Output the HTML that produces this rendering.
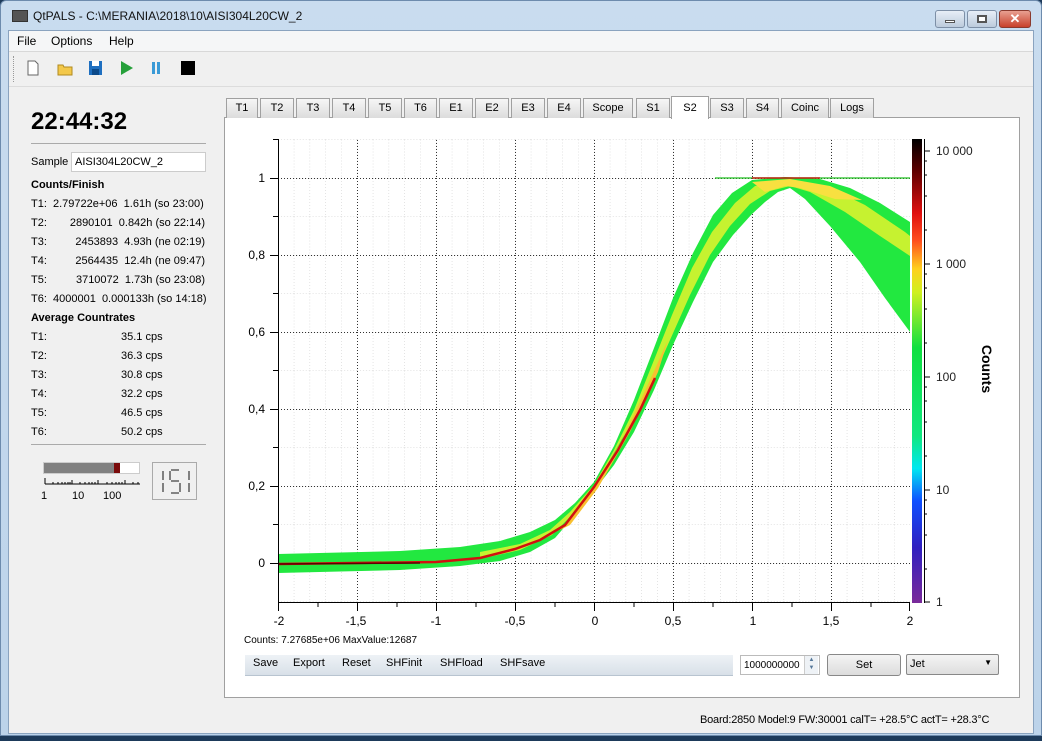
<!DOCTYPE html>
<html><head><meta charset="utf-8">
<style>
*{margin:0;padding:0;box-sizing:border-box}
body{width:1042px;height:741px;overflow:hidden;background:#1d3a5a;font-family:"Liberation Sans",sans-serif;font-size:11px;color:#000;position:relative}
.abs{position:absolute}
#frame{left:0;top:0;width:1042px;height:736px;background:linear-gradient(#c9dcef,#bcd3ea);border:1px solid #6d8bad;border-radius:6px 6px 0 0}
#client{left:8px;top:30px;width:1026px;height:704px;background:#f0f0f0;border:1px solid #8aa3bf}
.tab{position:absolute;top:98px;height:20px;border:1px solid #a0a0a0;border-bottom:none;background:linear-gradient(#f6f6f6,#dcdcdc);text-align:center;line-height:19px;font-size:11px}
.lp{position:absolute;left:31px;font-size:11px}
.r{position:absolute;text-align:right}
</style></head><body>
<div id="frame" class="abs"></div>
<div class="abs" style="left:12px;top:10px;width:16px;height:12px;background:#555;border:1px solid #333"></div>
<div class="abs" style="left:33px;top:9px;font-size:12px;color:#111">QtPALS - C:\MERANIA\2018\10\AISI304L20CW_2</div>
<div class="abs" style="left:935px;top:10px;width:30px;height:18px;border:1px solid #7d8fa6;border-radius:3px;background:linear-gradient(#e7eef7,#bccbdc)"><div style="margin:9px auto 0;width:10px;height:3px;background:#fff;border:1px solid #555"></div></div>
<div class="abs" style="left:967px;top:10px;width:30px;height:18px;border:1px solid #7d8fa6;border-radius:3px;background:linear-gradient(#e7eef7,#bccbdc)"><div style="margin:4px auto 0;width:10px;height:8px;border:2px solid #555;background:#fff"></div></div>
<div class="abs" style="left:999px;top:10px;width:32px;height:18px;border:1px solid #8a3a2e;border-radius:3px;background:linear-gradient(#e8a091,#c8402a);color:#fff;text-align:center;font-weight:bold;font-size:13px;line-height:16px">✕</div>
<div id="client" class="abs"></div>
<div class="abs" style="left:9px;top:31px;width:1024px;height:20px;background:#f5f6f7"></div>
<div class="abs" style="left:17px;top:34px;font-size:12px">File</div>
<div class="abs" style="left:51px;top:34px;font-size:12px">Options</div>
<div class="abs" style="left:109px;top:34px;font-size:12px">Help</div>
<div class="abs" style="left:9px;top:51px;width:1024px;height:1px;background:#d8d8d8"></div>
<div class="abs" style="left:13px;top:56px;width:1px;height:26px;border-left:1px dotted #999"></div>
<svg class="abs" style="left:20px;top:56px" width="180" height="26">
<path d="M8 5h7l3 3v11H8z" fill="#fff" stroke="#666"/>
<path d="M38 9h5l1 2h8v8H38z" fill="#f3c84a" stroke="#b08a20"/>
<rect x="69" y="5" width="13" height="14" fill="#1e6fc0"/><rect x="72" y="5" width="7" height="5" fill="#fff"/><rect x="72" y="13" width="7" height="6" fill="#0b4a8a"/>
<path d="M101 5l12 7-12 7z" fill="#26a03a"/>
<rect x="132" y="6" width="3" height="12" fill="#3a9ad6"/><rect x="137" y="6" width="3" height="12" fill="#3a9ad6"/>
<rect x="161" y="5" width="14" height="14" fill="#000"/>
</svg>
<div class="abs" style="left:9px;top:86px;width:1024px;height:1px;background:#dcdcdc"></div>

<!-- left panel -->
<div class="lp" style="top:108px;font-size:24px;font-weight:bold">22:44:32</div>
<div class="abs" style="left:31px;top:143px;width:175px;height:1px;background:#aaa"></div>
<div class="lp" style="top:156px">Sample</div>
<div class="abs" style="left:71px;top:152px;width:135px;height:20px;background:#fff;border:1px solid #ccc;padding:3px 0 0 3px">AISI304L20CW_2</div>
<div class="lp" style="top:179px;font-weight:bold">Counts/Finish</div>
<div class="lp" style="top:198px">T1:&nbsp; 2.79722e+06&nbsp; 1.61h (so 23:00)</div>
<div class="lp" style="top:217px">T2:</div><div class="r" style="left:60px;width:145px;top:217px">2890101&nbsp; 0.842h (so 22:14)</div>
<div class="lp" style="top:236px">T3:</div><div class="r" style="left:60px;width:145px;top:236px">2453893&nbsp; 4.93h (ne 02:19)</div>
<div class="lp" style="top:255px">T4:</div><div class="r" style="left:60px;width:145px;top:255px">2564435&nbsp; 12.4h (ne 09:47)</div>
<div class="lp" style="top:274px">T5:</div><div class="r" style="left:60px;width:145px;top:274px">3710072&nbsp; 1.73h (so 23:08)</div>
<div class="lp" style="top:293px">T6:&nbsp; 4000001&nbsp; 0.000133h (so 14:18)</div>
<div class="lp" style="top:312px;font-weight:bold">Average Countrates</div>
<div class="lp" style="top:331px">T1:</div><div class="abs" style="left:121px;top:331px">35.1 cps</div>
<div class="lp" style="top:350px">T2:</div><div class="abs" style="left:121px;top:350px">36.3 cps</div>
<div class="lp" style="top:369px">T3:</div><div class="abs" style="left:121px;top:369px">30.8 cps</div>
<div class="lp" style="top:388px">T4:</div><div class="abs" style="left:121px;top:388px">32.2 cps</div>
<div class="lp" style="top:407px">T5:</div><div class="abs" style="left:121px;top:407px">46.5 cps</div>
<div class="lp" style="top:426px">T6:</div><div class="abs" style="left:121px;top:426px">50.2 cps</div>
<div class="abs" style="left:31px;top:444px;width:175px;height:1px;background:#aaa"></div>
<div class="abs" style="left:43px;top:462px;width:97px;height:12px;background:#fff;border:1px solid #ccc"></div>
<div class="abs" style="left:44px;top:463px;width:70px;height:10px;background:#808080"></div>
<div class="abs" style="left:114px;top:463px;width:6px;height:10px;background:#7a0a0a"></div>
<svg class="abs" style="left:40px;top:476px" width="105" height="10"><path d="M5 8h95M5 2v6M32 4v4M58 4v4M85 4v4M13 6v2M18 6v2M22 6v2M25 6v2M28 6v2M30 6v2M40 6v2M45 6v2M49 6v2M52 6v2M55 6v2M67 6v2M72 6v2M76 6v2M79 6v2M82 6v2M93 6v2M98 6v2" stroke="#000" stroke-width="1"/></svg>
<div class="abs" style="left:41px;top:490px;font-size:11px">1</div>
<div class="abs" style="left:72px;top:490px;font-size:11px">10</div>
<div class="abs" style="left:103px;top:490px;font-size:11px">100</div>
<div class="abs" style="left:152px;top:462px;width:45px;height:38px;border:1px solid #aaa;background:#f0f0f0"></div>
<svg class="abs" style="left:152px;top:462px" width="45" height="38"><g stroke="#444" stroke-width="1.3" fill="none">
<path d="M11 9v9M11 21v9"/>
<path d="M19 8h8M18 9v9M19 19h8M28 21v9M19 31h8"/>
<path d="M37 9v9M37 21v9"/></g></svg>

<!-- tabs panel -->
<div class="abs" style="left:224px;top:117px;width:796px;height:581px;background:#fff;border:1px solid #a0a0a0"></div>
<div class="tab" style="left:226px;width:32px">T1</div>
<div class="tab" style="left:260px;width:34px">T2</div>
<div class="tab" style="left:296px;width:34px">T3</div>
<div class="tab" style="left:332px;width:34px">T4</div>
<div class="tab" style="left:368px;width:34px">T5</div>
<div class="tab" style="left:404px;width:33px">T6</div>
<div class="tab" style="left:439px;width:34px">E1</div>
<div class="tab" style="left:475px;width:34px">E2</div>
<div class="tab" style="left:511px;width:34px">E3</div>
<div class="tab" style="left:547px;width:34px">E4</div>
<div class="tab" style="left:583px;width:50px">Scope</div>
<div class="tab" style="left:636px;width:34px">S1</div>
<div class="tab" style="left:671px;width:38px;top:96px;height:23px;background:#fff;line-height:22px;z-index:2">S2</div>
<div class="tab" style="left:710px;width:34px">S3</div>
<div class="tab" style="left:746px;width:33px">S4</div>
<div class="tab" style="left:781px;width:48px">Coinc</div>
<div class="tab" style="left:830px;width:44px">Logs</div>

<svg class="abs" style="left:0;top:0" width="1042" height="741">
<defs>
<pattern id="mn" x="278" y="139.5" width="15.8" height="38.5" patternUnits="userSpaceOnUse">
<path d="M0 0V38.5M0 0H15.8" stroke="#c8c8c8" stroke-width="1" stroke-dasharray="1 2" fill="none"/></pattern>
<pattern id="mj" x="278" y="178" width="79" height="77" patternUnits="userSpaceOnUse">
<path d="M0.5 0V77M0 0.5H79" stroke="#333" stroke-width="1" stroke-dasharray="1 2" fill="none"/></pattern>
<linearGradient id="cb" x1="0" y1="1" x2="0" y2="0">
<stop offset="0" stop-color="#7a2a9a"/><stop offset="0.12" stop-color="#3020c0"/><stop offset="0.22" stop-color="#1050ff"/><stop offset="0.29" stop-color="#00e8f0"/><stop offset="0.36" stop-color="#10e880"/><stop offset="0.55" stop-color="#10e040"/><stop offset="0.67" stop-color="#d0f020"/><stop offset="0.72" stop-color="#ffd020"/><stop offset="0.78" stop-color="#ff5020"/><stop offset="0.84" stop-color="#e01010"/><stop offset="0.93" stop-color="#600000"/><stop offset="1" stop-color="#000"/></linearGradient>
</defs>
<rect x="278" y="139" width="632" height="463" fill="url(#mn)"/>
<rect x="278" y="139" width="632" height="463" fill="url(#mj)"/>
<!-- data -->
<path d="M278 554L400 551L460 547L500 541L530 532L555 520L575 503L594 482L614 446L634 400L654 348L673 298L693 253L713 215L732 193L752 180L785 177L820 179L850 188L880 203L910 222L910 332L885 298L860 262L830 226L805 199L790 188L778 192L765 202L752 214L733 235L713 262L693 302L673 345L654 390L634 432L614 465L594 491L575 515L555 538L530 552L500 561L460 566L400 570L278 573Z" fill="#22e840"/>
<path d="M480 552L520 544L550 530L570 512L594 485L614 450L634 410L654 360L672 315L692 268L712 232L735 203L755 186L790 181L830 188L865 205L905 232L910 236L910 256L880 236L845 212L810 192L790 186L770 191L750 204L730 226L710 255L690 295L670 340L650 385L630 425L610 460L594 487L572 515L552 535L520 550L480 559Z" fill="#c6f230"/>
<path d="M752 182L790 179L830 186L862 200L835 199L800 188L785 186L765 192Z" fill="#f8e040"/>
<path d="M560 530L594 488L622 440L650 380L668 340L658 372L630 432L598 488L570 525Z" fill="#f8c030"/>
<path d="M278 564L436 562L480 558L515 549L540 540L565 525L594 487L618 450L640 410L655 378" fill="none" stroke="#d01010" stroke-width="2.5"/>
<path d="M278 564L420 563" stroke="#5a0000" stroke-width="1.5"/>
<path d="M715 178L910 178" stroke="#20c020" stroke-width="1.2"/>
<path d="M752 178L820 178" stroke="#c02010" stroke-width="1.5"/>
<!-- axes -->
<path d="M278.5 139V602.5H910" stroke="#000" fill="none"/>
<g stroke="#000">
<path d="M270 178.5h8M270 255.5h8M270 332.5h8M270 409.5h8M270 486.5h8M270 563.5h8M273 139.5h5M273 216.5h5M273 293.5h5M273 370.5h5M273 447.5h5M273 524.5h5"/>
<path d="M278.5 603v8M357.5 603v8M436.5 603v8M515.5 603v8M594.5 603v8M673.5 603v8M752.5 603v8M831.5 603v8M909.5 603v8M318 603v4M397 603v4M476 603v4M555 603v4M634 603v4M713 603v4M792 603v4M871 603v4"/>
</g>
<g font-family="Liberation Sans" font-size="12" text-anchor="end">
<text x="265" y="182">1</text><text x="265" y="259">0,8</text><text x="265" y="336">0,6</text><text x="265" y="413">0,4</text><text x="265" y="490">0,2</text><text x="265" y="567">0</text></g>
<g font-family="Liberation Sans" font-size="12" text-anchor="middle">
<text x="279" y="625">-2</text><text x="356" y="625">-1,5</text><text x="436" y="625">-1</text><text x="515" y="625">-0,5</text><text x="595" y="625">0</text><text x="673" y="625">0,5</text><text x="753" y="625">1</text><text x="831" y="625">1,5</text><text x="910" y="625">2</text></g>
<rect x="912" y="139" width="10" height="464" fill="url(#cb)"/>
<path d="M924.5 139V603" stroke="#000"/>
<g stroke="#000"><path d="M924 151h6M924 264h6M924 377h6M924 490h6M924 602h6M924 161h3M924 175h3M924 196h3M924 230h3M924 274h3M924 288h3M924 309h3M924 343h3M924 387h3M924 401h3M924 422h3M924 456h3M924 500h3M924 514h3M924 535h3M924 569h3"/></g>
<g font-family="Liberation Sans" font-size="12" fill="#222">
<text x="936" y="155">10 000</text><text x="936" y="268">1 000</text><text x="936" y="381">100</text><text x="936" y="494">10</text><text x="936" y="606">1</text></g>
<text transform="translate(982,369) rotate(90)" font-family="Liberation Sans" font-size="14" font-weight="bold" text-anchor="middle">Counts</text>
</svg>

<div class="abs" style="left:244px;top:635px;font-size:10px">Counts: 7.27685e+06 MaxValue:12687</div>
<div class="abs" style="left:245px;top:655px;width:488px;height:21px;background:linear-gradient(#eef2f6,#d8e0e8);border-bottom:1px solid #b8c4d0"></div>
<div class="abs" style="left:253px;top:657px;font-size:11px">Save</div>
<div class="abs" style="left:293px;top:657px;font-size:11px">Export</div>
<div class="abs" style="left:342px;top:657px;font-size:11px">Reset</div>
<div class="abs" style="left:386px;top:657px;font-size:11px">SHFinit</div>
<div class="abs" style="left:440px;top:657px;font-size:11px">SHFload</div>
<div class="abs" style="left:500px;top:657px;font-size:11px">SHFsave</div>
<div class="abs" style="left:740px;top:655px;width:80px;height:20px;background:#fff;border:1px solid #bbb;font-size:10px;padding:4px 0 0 3px">1000000000</div>
<div class="abs" style="left:804px;top:656px;width:14px;height:18px;background:#eef2f6;border-left:1px solid #ccc;font-size:6px;color:#579;text-align:center;line-height:8px">▲<br>▼</div>
<div class="abs" style="left:827px;top:654px;width:74px;height:22px;border:1px solid #888;border-radius:3px;background:linear-gradient(#f4f4f4,#dcdcdc);text-align:center;line-height:20px">Set</div>
<div class="abs" style="left:906px;top:654px;width:93px;height:21px;border:1px solid #888;border-radius:2px;background:linear-gradient(#f4f4f4,#dedede);padding:3px 0 0 3px">Jet<span style="position:absolute;right:6px;top:3px;font-size:8px">▼</span></div>
<div class="abs" style="left:700px;top:714px;font-size:11px;letter-spacing:-0.2px">Board:2850 Model:9 FW:30001 calT= +28.5°C actT= +28.3°C</div>
</body></html>
